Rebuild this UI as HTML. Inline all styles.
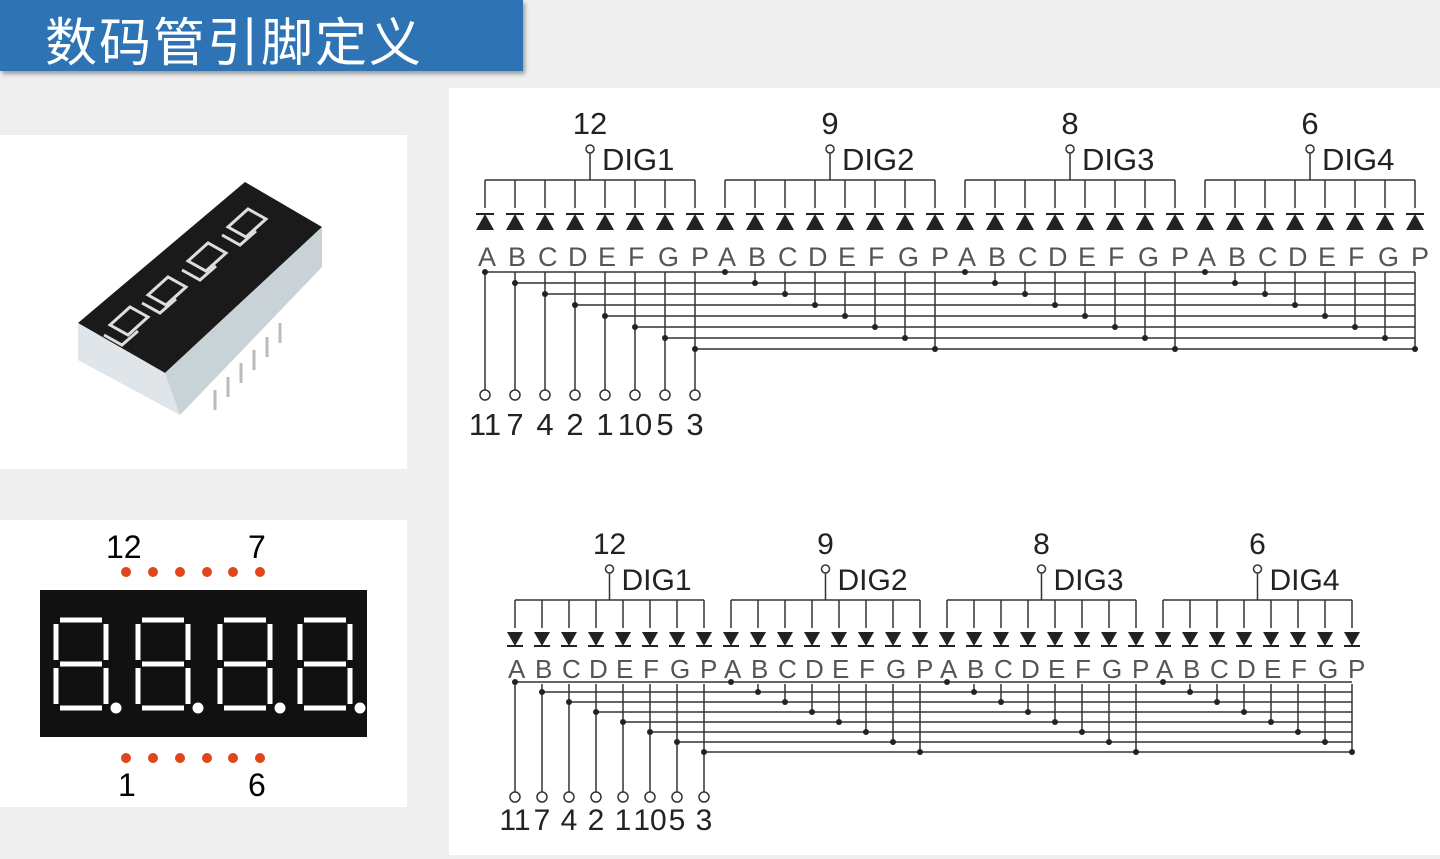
<!DOCTYPE html><html><head><meta charset="utf-8"><style>
body{margin:0;width:1440px;height:859px;background:#efefef;position:relative;overflow:hidden;font-family:"Liberation Sans","Noto Sans CJK SC",sans-serif}
#hd{position:absolute;left:0;top:0;width:523px;height:71px;background:#2e74b5;box-shadow:2px 3px 4px rgba(0,0,0,.35)}
#hd span{position:absolute;left:45px;top:1px;font-size:52px;color:#fff;font-family:"Noto Sans CJK SC",sans-serif;letter-spacing:2px}
.box{position:absolute;background:#fff}
</style></head><body>
<div id="hd"><span>数码管引脚定义</span></div>
<div class="box" style="left:0;top:135px;width:407px;height:334px">
<svg width="407" height="334">
<polygon points="78,188 245,47 322,92 322,132 180,280 78,225" fill="#e8ecee"/>
<polygon points="78,188 245,47 322,92 165,238" fill="#1a1a1a"/>
<polygon points="78,188 165,238 180,280 78,225" fill="#dfe5e8"/>
<polygon points="165,238 322,92 322,132 180,280" fill="#c9d2d6"/>
<g fill="none" stroke="#ddd" stroke-width="3">
<path d="M110,190 l20,-18 l18,10 l-20,18z M148,160 l20,-18 l18,10 l-20,18z M188,126 l20,-18 l18,10 l-20,18z M228,92 l20,-18 l18,10 l-20,18z"/>
<path d="M104,200 l18,10 l16,-14 M142,168 l18,10 l16,-14 M182,135 l18,10 l16,-14 M222,100 l18,10 l16,-14"/>
</g>
<g stroke="#bbb" stroke-width="3"><path d="M215,255v20 M228,242v20 M241,228v20 M254,215v20 M267,202v20 M280,188v20"/></g>
</svg></div>
<div class="box" style="left:0;top:520px;width:407px;height:287px">
<svg width="407" height="287">
<text x="106" y="38" font-size="32" font-family="Liberation Sans">12</text>
<text x="248" y="38" font-size="32" font-family="Liberation Sans">7</text>
<text x="118" y="276" font-size="32" font-family="Liberation Sans">1</text>
<text x="248" y="276" font-size="32" font-family="Liberation Sans">6</text>
<g fill="#e0451c"><circle cx="126" cy="52" r="5"/><circle cx="153" cy="52" r="5"/><circle cx="180" cy="52" r="5"/><circle cx="207" cy="52" r="5"/><circle cx="233" cy="52" r="5"/><circle cx="260" cy="52" r="5"/>
<circle cx="126" cy="238" r="5"/><circle cx="153" cy="238" r="5"/><circle cx="180" cy="238" r="5"/><circle cx="207" cy="238" r="5"/><circle cx="233" cy="238" r="5"/><circle cx="260" cy="238" r="5"/></g>
<rect x="40" y="70" width="327" height="147" fill="#111"/>
<g id="digs" fill="none" stroke="#fff" stroke-width="5"></g>
</svg></div>
<div class="box" style="left:449px;top:88px;width:991px;height:767px"></div>
<svg id="sch" style="position:absolute;left:0;top:0" width="1440" height="859"></svg>
<script>
var d=document.getElementById('digs'),s='';
[56,138,220,300].forEach(function(x){var w=50,t=100,h=88;
s+='<path d="M'+(x+4)+','+t+'h'+(w-8)+' M'+x+','+(t+4)+'v'+(h/2-8)+' M'+(x+w)+','+(t+4)+'v'+(h/2-8)+' M'+(x+4)+','+(t+h/2)+'h'+(w-8)+' M'+x+','+(t+h/2+4)+'v'+(h/2-8)+' M'+(x+w)+','+(t+h/2+4)+'v'+(h/2-8)+' M'+(x+4)+','+(t+h)+'h'+(w-8)+'"/>';
s+='<circle cx="'+(x+w+10)+'" cy="'+(t+h)+'" r="3" fill="#fff"/>';});
d.innerHTML=s;
var g='',L=['A','B','C','D','E','F','G','DP'],P=['11','7','4','2','1','10','5','3'],C=['12','9','8','6'];
function diag(x0,dx,busY,tri,up,labY,ly0,ldy,pinY,numY,fs,dig){
 g+='<g stroke="#333" stroke-width="1.5" fill="none">';
 for(var k=0;k<4;k++){var a=x0+k*8*dx,b=a+7*dx,cx=a+3.5*dx;
  g+='<path d="M'+a+','+busY+'H'+b+'"/>';
  g+='<path d="M'+(cx)+','+(busY-28)+'V'+busY+'"/><circle cx="'+cx+'" cy="'+(busY-31)+'" r="4" fill="#fff"/>';
 }
 for(var i=0;i<32;i++){var x=x0+i*dx,seg=i%8,ly=ly0+seg*ldy;
  g+='<path d="M'+x+','+busY+'V'+(tri-10)+'M'+x+','+(labY+6)+'V'+(i<8?pinY-5:ly)+'"/>';
 }
 for(var j=0;j<8;j++){var ly=ly0+j*ldy;g+='<path d="M'+(x0+j*dx)+','+ly+'H'+(x0+31*dx)+'"/>';
  g+='<circle cx="'+(x0+j*dx)+'" cy="'+pinY+'" r="5" fill="#fff"/>';}
 g+='</g><g fill="#222">';
 for(var i=0;i<32;i++){var x=x0+i*dx,seg=i%8,ly=ly0+seg*ldy;
  if(up)g+='<path d="M'+(x-9)+','+(tri+12)+'L'+x+','+(tri-4)+'L'+(x+9)+','+(tri+12)+'z"/><path d="M'+(x-9)+','+(tri-4)+'h18" stroke="#222" stroke-width="2"/>';
  else g+='<path d="M'+(x-8)+','+(tri-6)+'L'+x+','+(tri+8)+'L'+(x+8)+','+(tri-6)+'z"/><path d="M'+(x-8)+','+(tri+8)+'h16" stroke="#222" stroke-width="2"/>';
  g+='<circle cx="'+x+'" cy="'+ly+'" r="3"/>';
  g+='<text x="'+(x-(seg==7?4:7))+'" y="'+(labY)+'" font-size="'+(fs-4)+'" fill="#555">'+(seg==7?'P':L[seg])+'</text>';
 }
 for(var j=0;j<8;j++)g+='<text x="'+(x0+j*dx)+'" y="'+numY+'" font-size="'+fs+'" text-anchor="middle">'+P[j]+'</text>';
 for(var k=0;k<4;k++){var cx=x0+k*8*dx+3.5*dx;g+='<text x="'+cx+'" y="'+(busY-46)+'" font-size="'+fs+'" text-anchor="middle">'+C[k]+'</text><text x="'+(cx+12)+'" y="'+(busY-10)+'" font-size="'+fs+'">DIG'+(k+1)+'</text>';}
 g+='</g>';
}
diag(485,30,180,218,true,266,272,11,395,435,31);
diag(515,27,600,638,false,678,682,10,797,830,30);
document.getElementById('sch').innerHTML=g;
</script>
</body></html>
